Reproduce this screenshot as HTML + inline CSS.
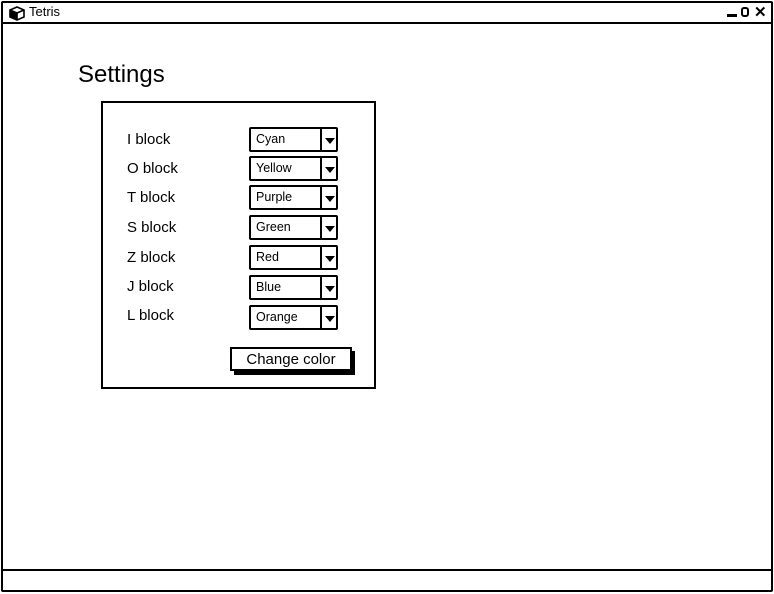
<!DOCTYPE html>
<html><head><style>
body{margin:0;width:774px;height:594px;background:#fff;position:relative;overflow:hidden;font-family:"Liberation Sans",sans-serif;color:#000}
.a{position:absolute;box-sizing:border-box}
.lbl{position:absolute;left:127px;font-size:15px}
.dd{position:absolute;left:249px;width:89px;height:25px;border:2px solid #000;border-radius:2px;box-sizing:border-box;font-size:12.5px}
.dd span{position:absolute;left:5px;top:3px}
.dd i{position:absolute;left:69px;top:0;bottom:0;border-left:2px solid #000}
.dd b{position:absolute;left:74px;top:9px;width:0;height:0;border-left:5px solid transparent;border-right:5px solid transparent;border-top:6px solid #000}
</style></head><body>
<div class="a" style="left:1px;top:1px;width:772px;height:591px;border:2px solid #000;border-radius:2px"></div>
<div class="a" style="left:1px;top:22px;width:772px;height:2px;background:#000"></div>
<div class="a" style="left:1px;top:569px;width:772px;height:2px;background:#000"></div>
<svg class="a" style="left:9px;top:6px" width="16" height="15" viewBox="0 0 16 15"><path d="M8 1 L15 4 L15 11 L8 14 L1 11 L1 4 Z" fill="#fff" stroke="#000" stroke-width="1.6"/><path d="M1 4 L8 7 L15 4 M8 7 L8 14" stroke="#000" stroke-width="1.6" fill="none"/><path d="M1 4 L8 7 L8 14 L1 11Z" fill="#000"/></svg>
<div class="a" style="left:29px;top:4px;font-size:13px">Tetris</div>
<div class="a" style="left:727px;top:14px;width:10px;height:3px;background:#000"></div>
<div class="a" style="left:741px;top:7px;width:8px;height:10px;border:2px solid #000;border-radius:3px"></div>
<div class="a" style="left:754px;top:3px;font-size:15px;font-weight:bold">✕</div>
<div class="a" style="left:78px;top:61px;font-size:24px">Settings</div>
<div class="a" style="left:101px;top:101px;width:275px;height:288px;border:2px solid #000"></div>
<div class="lbl" style="top:131px">I block</div>
<div class="lbl" style="top:160px">O block</div>
<div class="lbl" style="top:189px">T block</div>
<div class="lbl" style="top:219px">S block</div>
<div class="lbl" style="top:249px">Z block</div>
<div class="lbl" style="top:278px">J block</div>
<div class="lbl" style="top:307px">L block</div>
<div class="dd" style="top:127px"><span>Cyan</span><i></i><b></b></div>
<div class="dd" style="top:156px"><span>Yellow</span><i></i><b></b></div>
<div class="dd" style="top:185px"><span>Purple</span><i></i><b></b></div>
<div class="dd" style="top:215px"><span>Green</span><i></i><b></b></div>
<div class="dd" style="top:245px"><span>Red</span><i></i><b></b></div>
<div class="dd" style="top:275px"><span>Blue</span><i></i><b></b></div>
<div class="dd" style="top:305px"><span>Orange</span><i></i><b></b></div>
<div class="a" style="left:234px;top:351px;width:121px;height:24px;background:#000"></div>
<div class="a" style="left:230px;top:347px;width:122px;height:24px;border:2px solid #000;background:#fff;font-size:15px;text-align:center;line-height:22px">Change color</div>
</body></html>
